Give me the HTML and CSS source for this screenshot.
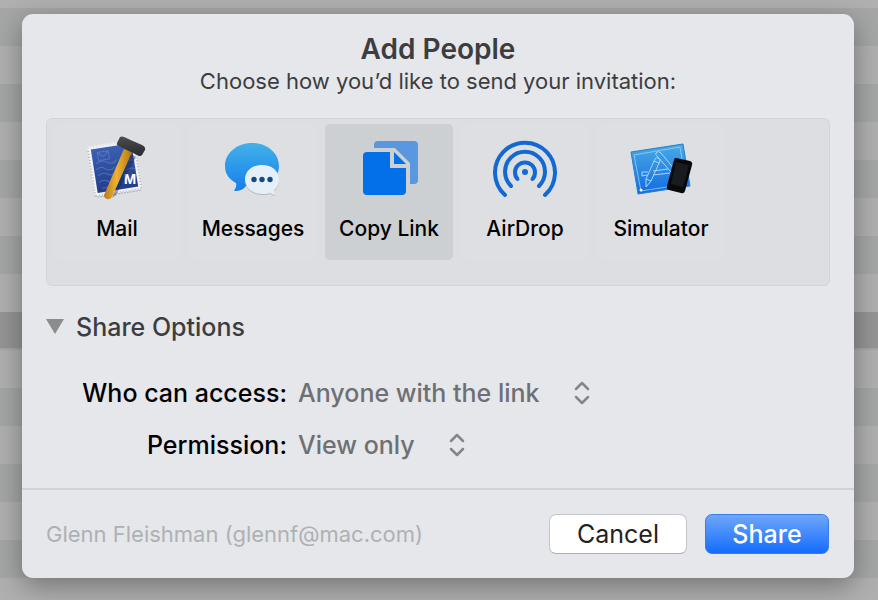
FILE: index.html
```html
<!DOCTYPE html>
<html lang="en">
<head>
<meta charset="utf-8">
<title>Add People</title>
<link rel="stylesheet" href="styles.css">
</head>
<body>
<main class="dialog">
  <header class="heading">
    <h1>Add People</h1>
    <p>Choose how you’d like to send your invitation:</p>
  </header>

  <div class="services">
    <button class="service" type="button">
      <svg class="icon" viewBox="0 0 64 64" aria-hidden="true">
        <defs>
          <linearGradient id="handle" x1="0" x2="1"><stop offset="0" stop-color="#b97a16"/><stop offset=".45" stop-color="#edb237"/><stop offset="1" stop-color="#b4770f"/></linearGradient>
          <linearGradient id="head" x1="0" y1="0" x2="0" y2="1"><stop offset="0" stop-color="#4c4d4e"/><stop offset="1" stop-color="#292a2b"/></linearGradient>
          <linearGradient id="stampFill" x1="0" y1="0" x2="0" y2="1"><stop offset="0" stop-color="#3b60b2"/><stop offset="1" stop-color="#213c8b"/></linearGradient>
        </defs>
        <g transform="rotate(-9 30 32)">
          <rect x="7" y="9" width="45" height="48" fill="#a4a8ad" stroke="#a4a8ad" stroke-width="3" stroke-dasharray="2 1"/>
          <rect x="7" y="8" width="45" height="48" fill="#f1f3f6" stroke="#f1f3f6" stroke-width="3" stroke-dasharray="2 1"/>
          <rect x="9" y="10" width="41" height="44" fill="url(#stampFill)"/>
          <g fill="none" stroke="#7893cc" stroke-width="1" opacity=".5">
            <path d="M15 14h11v8h-11zM15 14l5 5 6-5M12 25q6-4 11 0t10-1M11 31q5-4 9 0t10 0M12 37q6-3 10 0t9-1M12 44q5-3 9 0t7 0M40 28q5-4 10 0M41 36q5-3 9 0M14 50h12"/>
          </g>
        </g>
        <text x="39" y="48" class="stamp-letter">M</text>
        <path d="M46 18 27 62l4-3 20-38z" fill="#14203e" opacity=".4"/>
        <path d="M39 13l8 3L27 61q-2 3-5 2t-3-4z" fill="url(#handle)"/>
        <path d="M35 1q2-1 4 0l18 8q4 2 3 5l-3 5q-2 2-5 0L34 10q-3-1-2-3z" fill="url(#head)"/>
      </svg>
      <span>Mail</span>
    </button>
    <button class="service" type="button">
      <svg class="icon" viewBox="0 0 64 64" aria-hidden="true">
        <defs><linearGradient id="bubble" x1="0" y1="0" x2="0" y2="1"><stop offset="0" stop-color="#42b1ea"/><stop offset="1" stop-color="#157eec"/></linearGradient></defs>
        <path d="M31 7C16 7 4 17 4 30c0 8 4 13 11 17 1 4-1 6-2 8 6 0 10-2 12-5 19 4 33-6 33-20C58 17 46 7 31 7z" fill="url(#bubble)"/>
        <path d="M41 30c-10 0-17 6-17 14.500S32 59 41 59c3 0 5 0 8-1 2 1 4 2 5 2l-1-5c3-2 5-6 5-10.500C58 36 51 30 41 30z" fill="#8796a8" opacity=".5"/>
        <path d="M41 29c-10 0-17 6-17 14.500S32 58 41 58c3 0 5 0 8-1 2 1 4 2 5 2l-1-5c3-2 5-6 5-10.500C58 35 51 29 41 29z" fill="#e6eff8"/>
        <g fill="#124a87"><circle cx="33" cy="43.500" r="2.700"/><circle cx="41" cy="43.500" r="2.700"/><circle cx="49" cy="43.500" r="2.700"/></g>
      </svg>
      <span>Messages</span>
    </button>
    <button class="service selected" type="button" aria-pressed="true">
      <svg class="icon" viewBox="0 0 64 64" aria-hidden="true">
        <path d="M21 5h36q4 0 4 4v35q0 4-4 4h-4V27L38 12H17V9q0-4 4-4z" fill="#5997df"/>
        <path d="M10 16h23v16h16v23q0 4-4 4H10q-4 0-4-4V20q0-4 4-4z" fill="#0370e9"/>
        <path d="M37 16v12h12z" fill="#0370e9"/>
      </svg>
      <span>Copy Link</span>
    </button>
    <button class="service" type="button">
      <svg class="icon" viewBox="0 0 64 64" aria-hidden="true">
        <g fill="none" stroke="#1269d3" stroke-width="4" stroke-linecap="round">
          <path d="M12 59A30 30 0 1 1 52 59"/>
          <path d="M18 50A20 20 0 1 1 46 50"/>
          <path d="M24.500 43A10 10 0 1 1 39.500 43"/>
        </g>
        <circle cx="32" cy="36" r="3" fill="#1269d3"/>
      </svg>
      <span>AirDrop</span>
    </button>
    <button class="service" type="button">
      <svg class="icon" viewBox="0 0 64 64" aria-hidden="true">
        <defs><linearGradient id="blueprint" x1="0" y1="0" x2="0" y2="1"><stop offset="0" stop-color="#4aaae4"/><stop offset="1" stop-color="#126be2"/></linearGradient></defs>
        <path d="M2 16 54 8l7 42-52 8z" fill="url(#blueprint)" stroke="#2680ce" stroke-width="1"/>
        <g fill="none" stroke="#a4d8fa" stroke-width="1">
          <path d="M5 19l46-8 6 37-45 7z" opacity=".7"/>
          <path d="M24 35l15-2M24 39l17-2M19 36l-6 0v4l5-1"/>
          <path d="M27 17q2-3 5 0l14 17-4 2-14-16q-2-1-1-3z"/>
          <path d="M26 23q1-2 3-1t2 3L22 45l-5 6 0-8zM25 25l5 2M17 43l5 2"/>
        </g>
        <circle cx="12" cy="54" r="1.500" fill="#e9f5ff"/>
        <path d="M47 22l14 3q3 1 2 4l-7 26q-1 3-4 2l-12-3q-3-1-2-4l7-26q1-3 2-2z" fill="#08090b"/>
        <path d="M47 26l13 3-6 22-12-3z" fill="#191b1e"/>
      </svg>
      <span>Simulator</span>
    </button>
  </div>

  <details class="options" open>
    <summary>
      <svg class="triangle" viewBox="0 0 18 16" aria-hidden="true"><path d="M0 0h18L9 15z" fill="#8b8c8e"/></svg>
      Share Options
    </summary>
    <div class="fields">
      <label for="access">Who can access:</label>
      <div class="popup">
        <select id="access"><option>Anyone with the link</option></select>
        <svg class="arrows" viewBox="0 0 16 24" aria-hidden="true"><path d="M2 8l6-6 6 6M2 16l6 6 6-6"/></svg>
      </div>
      <label for="permission">Permission:</label>
      <div class="popup">
        <select id="permission"><option>View only</option></select>
        <svg class="arrows" viewBox="0 0 16 24" aria-hidden="true"><path d="M2 8l6-6 6 6M2 16l6 6 6-6"/></svg>
      </div>
    </div>
  </details>

  <footer class="footer">
    <span class="account">Glenn Fleishman (glennf@mac.com)</span>
    <button class="btn cancel" type="button">Cancel</button>
    <button class="btn share" type="button">Share</button>
  </footer>
</main>
</body>
</html>
```
FILE: styles.css
```css
* {
  box-sizing: border-box;
}

body {
  margin: 0;
  padding: 14px 24px 22px 22px;
  min-height: 100vh;
  font-family: Inter, "Liberation Sans", sans-serif;
  color: #000;
  /* dimmed list rows behind the sheet, one of them selected */
  background:
    linear-gradient(transparent 312px, #959595 312px 348px, transparent 348px),
    repeating-linear-gradient(#b0b0b0 0 8px, #a5a7a6 8px 46px, #b0b0b0 46px 76px);
}

button,
select {
  font-family: inherit;
}

.dialog {
  border-radius: 11px;
  background: #e5e7eb;
  box-shadow: 0 8px 28px rgba(0, 0, 0, 0.35);
}

.heading {
  padding: 18px 24px 22px;
  text-align: center;
  color: #3c3d40;
}

.heading h1 {
  margin: 0;
  font-size: 28px;
  line-height: 34px;
  font-weight: 600;
}

.heading p {
  margin: 0;
  font-size: 22px;
  line-height: 30px;
}

.services {
  display: flex;
  gap: 8px;
  margin: 0 24px;
  padding: 5px 6px 25px;
  border: 1px solid #d2d4d7;
  border-radius: 6px;
  background: #dcdee1;
}

.service {
  display: flex;
  flex-direction: column;
  align-items: center;
  gap: 16px;
  width: 128px;
  height: 136px;
  padding: 12px 0 0;
  border: 0;
  border-radius: 5px;
  background: #dddfe2;
  color: #000;
  font-size: 21px;
  font-weight: 500;
  line-height: 26px;
}

.service.selected {
  background: #cdd0d3;
}

.icon {
  width: 64px;
  height: 64px;
}

.stamp-letter {
  font: 700 13px Inter, sans-serif;
  fill: #fff;
}

.options {
  font-weight: 500;
}

.options summary {
  display: flex;
  align-items: center;
  gap: 12px;
  padding: 25px 24px 0;
  list-style: none;
  color: #3c3d40;
  font-size: 25px;
  line-height: 32px;
}

.triangle {
  width: 18px;
  height: 16px;
}

.fields {
  display: grid;
  grid-template-columns: 265px 1fr;
  gap: 20px 11px;
  padding: 34px 24px 27px 0;
  font-size: 25px;
  line-height: 32px;
}

.fields label {
  text-align: right;
  white-space: nowrap;
}

.popup {
  display: inline-grid;
  justify-self: start;
  align-items: center;
}

.popup select {
  grid-area: 1 / 1;
  appearance: none;
  height: 32px;
  padding: 0 50px 0 0;
  border: 0;
  background: transparent;
  color: #6f7073;
  font-size: 25px;
  font-weight: 500;
  line-height: 32px;
}

.arrows {
  grid-area: 1 / 1;
  justify-self: end;
  width: 16px;
  height: 24px;
  fill: none;
  stroke: #85868a;
  stroke-width: 2.5;
  stroke-linecap: round;
  stroke-linejoin: round;
  pointer-events: none;
}

.footer {
  display: flex;
  align-items: center;
  padding: 24px 25px 24px 24px;
  border-top: 2px solid #cfd3d6;
}

.account {
  flex: 1;
  color: #aeb1b4;
  font-size: 22px;
  line-height: 28px;
}

.btn {
  height: 40px;
  padding: 0;
  border-radius: 7px;
  font-size: 25px;
  line-height: 32px;
}

.cancel {
  width: 138px;
  margin-right: 18px;
  border: 1px solid #c3c5c8;
  border-bottom-color: #aaacaf;
  background: #fff;
  color: #222;
}

.share {
  width: 124px;
  border: 1px solid #3b7ce8;
  background: linear-gradient(#6ea6fb, #156cfd);
  color: #fff;
  font-weight: 500;
}
```
